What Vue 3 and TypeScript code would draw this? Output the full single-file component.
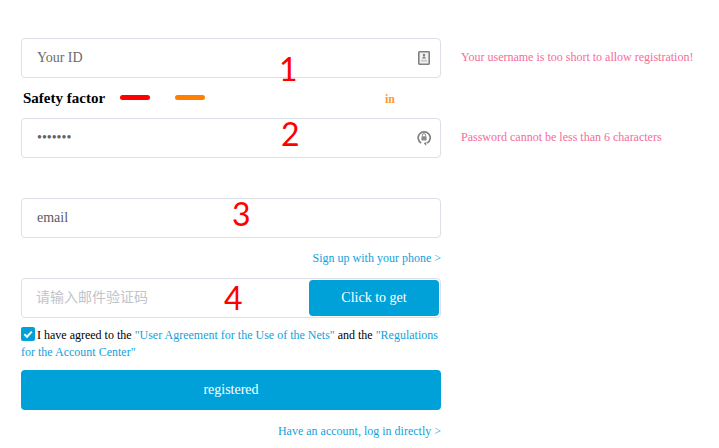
<script setup lang="ts">
</script>

<template>
  <main class="page">
    <div class="row">
      <div class="field">
        <input class="input" type="text" placeholder="Your ID" />
        <svg class="icon" viewBox="0 0 12 14" width="12" height="14" aria-hidden="true">
          <rect x="0.8" y="0.8" width="10.4" height="12.4" fill="#f1f1f1" stroke="#808080" stroke-width="1.6" rx="0.6" />
          <circle cx="6" cy="4" r="1.2" fill="#808080" />
          <path d="M3.8 7.6 L6 5 L8.2 7.6 Z" fill="#808080" />
          <rect x="3" y="9.2" width="6" height="1.2" fill="#b8b8b8" />
        </svg>
      </div>
      <p class="error">Your username is too short to allow registration!</p>
    </div>

    <div class="strength">
      <strong class="strength-label">Safety factor</strong>
      <span class="bar bar-red"></span>
      <span class="bar bar-orange"></span>
      <strong class="strength-value">in</strong>
    </div>

    <div class="row">
      <div class="field">
        <input class="input" type="password" value="1234567" />
        <svg class="icon icon-lock" viewBox="0 0 14 16" width="14" height="16" aria-hidden="true">
          <path d="M4.2 13 A6 6 0 1 1 10.2 13" fill="none" stroke="#808080" stroke-width="1.7" />
          <path d="M9.4 11.6 L6.8 13.6 L9.2 15.8 Z" fill="#808080" />
          <rect x="4.4" y="6.2" width="5.2" height="4.2" rx="0.7" fill="#8c8c8c" />
          <path d="M5.4 6.4 V5.2 A1.6 1.6 0 0 1 8.6 5.2 V6.4" fill="none" stroke="#8c8c8c" stroke-width="1" />
        </svg>
      </div>
      <p class="error">Password cannot be less than 6 characters</p>
    </div>

    <div class="field email">
      <input class="input dark" type="text" placeholder="email" />
    </div>

    <div class="switch-row">
      <a class="link" href="#">Sign up with your phone &gt;</a>
    </div>

    <div class="field code">
      <input class="input code-input" type="text" placeholder="请输入邮件验证码" />
      <button class="get-code" type="button">Click to get</button>
    </div>

    <p class="agreement"><span class="check" role="checkbox" aria-checked="true"><svg viewBox="0 0 14 14" width="14" height="14" aria-hidden="true"><path d="M3.4 7.3 L6 9.8 L10.8 4.6" fill="none" stroke="#fff" stroke-width="2" /></svg></span>I have agreed to the <a class="link" href="#">"User Agreement for the Use of the Nets"</a> and the <a class="link" href="#">"Regulations for the Account Center"</a></p>

    <button class="submit" type="button">registered</button>

    <div class="login-row">
      <a class="link" href="#">Have an account, log in directly &gt;</a>
    </div>

    <span class="mark mark-1">1</span>
    <span class="mark mark-2">2</span>
    <span class="mark mark-3">3</span>
    <span class="mark mark-4">4</span>
  </main>
</template>

<style scoped>
.page {
  position: relative;
  box-sizing: border-box;
  width: 719px;
  height: 448px;
  padding: 38px 0 0 21px;
  overflow: hidden;
  background: #fff;
  font-family: "Liberation Serif", "Noto Sans CJK SC", serif;
  font-size: 12px;
  color: #000;
}

.row {
  display: flex;
  align-items: center;
  gap: 20px;
}

.field {
  position: relative;
  flex: none;
  display: flex;
  align-items: center;
  box-sizing: border-box;
  width: 420px;
  height: 40px;
  border: 1px solid #dcdfe6;
  border-radius: 4px;
  background: #fff;
}

.input {
  flex: 1;
  min-width: 0;
  height: 100%;
  box-sizing: border-box;
  padding: 0 15px;
  border: 0;
  outline: 0;
  background: transparent;
  font: 14px "Liberation Serif", "Noto Sans CJK SC", serif;
  color: #606266;
}

.input::placeholder {
  color: #6b6b6b;
  opacity: 1;
}

.dark::placeholder {
  color: #555c66;
}

.code-input {
  padding-left: 14px;
}

.code-input::placeholder {
  color: #c0c4cc;
}

.icon {
  position: absolute;
  right: 10px;
  top: 12px;
}

.icon-lock {
  right: 9px;
  top: 11px;
}

.error {
  margin: 0 0 2px;
  font-size: 12px;
  color: #f56c9a;
  white-space: nowrap;
}

.strength {
  display: flex;
  align-items: center;
  width: 420px;
  height: 40px;
  padding-left: 2px;
  box-sizing: border-box;
}

.strength-label {
  width: 97px;
  font-size: 15px;
}

.bar {
  width: 30px;
  height: 5px;
  border-radius: 3px;
  margin-top: -1px;
}

.bar-red {
  background: #ff0000;
}

.bar-orange {
  margin-left: 25px;
  background: #ff8000;
}

.strength-value {
  margin: 2px 0 0 180px;
  font-size: 12px;
  color: #ff9933;
}

.email {
  margin-top: 40px;
}

.switch-row,
.login-row {
  display: flex;
  justify-content: flex-end;
  width: 420px;
}

.switch-row {
  height: 40px;
  align-items: center;
}

.link {
  color: #139fdb;
  text-decoration: none;
}

.get-code {
  flex: none;
  width: 130px;
  height: 36px;
  margin-right: 1px;
  border: 0;
  border-radius: 4px;
  background: #00a1d9;
  color: #fff;
  font: 14px "Liberation Serif", serif;
}

.agreement {
  width: 420px;
  margin: 9px 0 0;
  line-height: 17px;
}

.check {
  display: inline-block;
  width: 14px;
  height: 14px;
  margin-right: 2px;
  border-radius: 2px;
  background: #00a1d9;
  vertical-align: -2px;
}

.check svg {
  display: block;
}

.submit {
  display: block;
  width: 420px;
  height: 40px;
  margin-top: 9px;
  border: 0;
  border-radius: 4px;
  background: #00a1d9;
  color: #fff;
  font: 14px "Liberation Serif", serif;
}

.login-row {
  margin-top: 14px;
}

.mark {
  position: absolute;
  font: 32px/40px Lato, sans-serif;
  color: #ff0000;
}

.mark-1 { left: 279px; top: 49px; }
.mark-2 { left: 281px; top: 114px; }
.mark-3 { left: 232px; top: 194px; }
.mark-4 { left: 224px; top: 278px; }
</style>
